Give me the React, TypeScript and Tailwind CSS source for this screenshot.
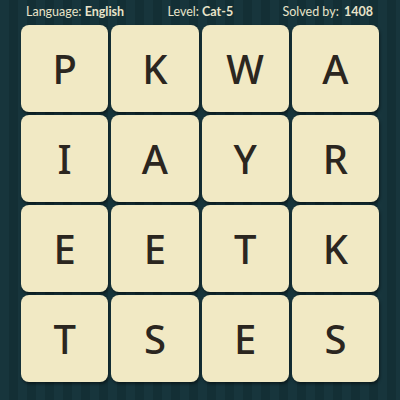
const rows = ["PKWA", "IAYR", "EETK", "TSES"];

export default function App() {
  return (
    <div className="w-[400px] h-[400px] overflow-hidden bg-[repeating-linear-gradient(90deg,#17353c_0px,#17353c_9px,#132f35_9px,#132f35_18px)] font-['Lato',sans-serif]">
      <div className="h-[25px] flex items-center justify-between pl-[26px] pr-[27px] text-[12.5px] text-[#e8e3c9] leading-none">
        <span>
          Language: <b className="font-bold">English</b>
        </span>
        <span className="-ml-[6px]">
          Level: <b className="font-bold">Cat-5</b>
        </span>
        <span>
          Solved by: <b className="font-bold ml-[2px]">1408</b>
        </span>
      </div>
      <div className="ml-[21px] w-[358px] grid grid-cols-4 gap-[3px]">
        {rows.join("").split("").map((ch, i) => (
          <div
            key={i}
            className="h-[87px] rounded-[8px] bg-[#f1e9c4] shadow-[1px_2px_3px_rgba(0,0,0,0.45)] flex items-center justify-center text-[40px] font-medium text-[#2b2620] font-['Noto_Sans',sans-serif]"
          >
            {ch}
          </div>
        ))}
      </div>
    </div>
  );
}
